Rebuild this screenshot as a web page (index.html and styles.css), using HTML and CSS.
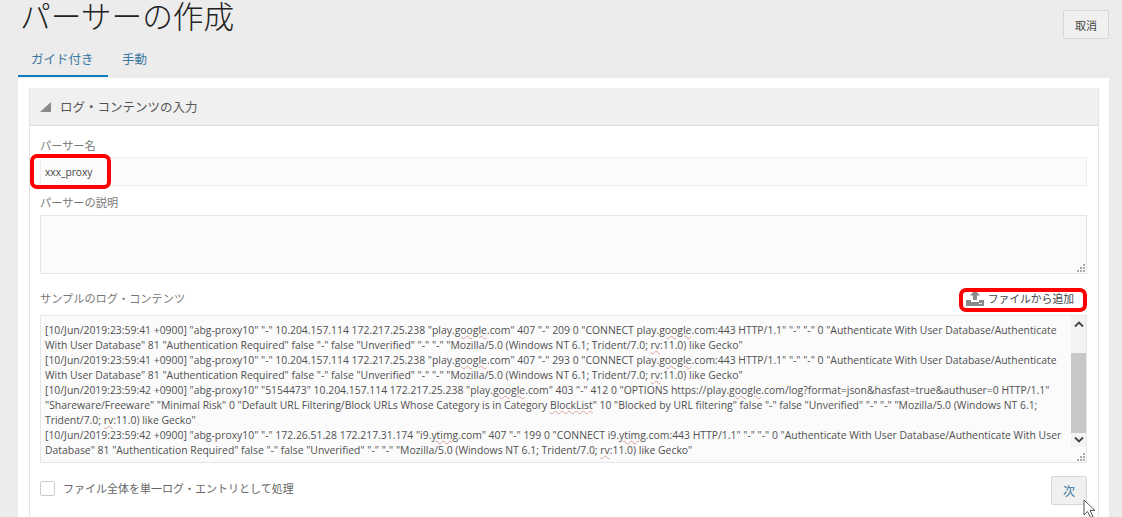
FILE: index.html
```html
<!DOCTYPE html>
<html lang="ja">
<head>
<meta charset="utf-8">
<title>パーサーの作成</title>
<link rel="stylesheet" href="styles.css">
</head>
<body>
<div class="page">
  <header class="top">
    <h1>パーサーの作成</h1>
    <button class="btn cancel">取消</button>
  </header>
  <nav class="tabs">
    <a class="tab active">ガイド付き</a>
    <a class="tab">手動</a>
  </nav>
  <main class="panel">
    <section class="section">
      <div class="section-head">
        <svg class="tri" width="11" height="11" viewBox="0 0 11 11"><path d="M11 1V11H0Z" fill="#8a8a8a"/></svg>
        <span>ログ・コンテンツの入力</span>
      </div>
      <div class="section-body">
        <label class="lbl">パーサー名</label>
        <div class="input"><span>xxx_proxy</span><i class="hl hl-name"></i></div>
        <label class="lbl lbl2">パーサーの説明</label>
        <div class="area desc"><svg class="grip" width="8" height="8" viewBox="0 0 8 8"><path d="M6 0h2v2H6zM3 3h2v2H3zM6 3h2v2H6zM0 6h2v2H0zM3 6h2v2H3zM6 6h2v2H6z" fill="#aaa"/></svg></div>
        <div class="sample-row">
          <label class="lbl">サンプルのログ・コンテンツ</label>
          <button class="file-btn">
            <svg width="18" height="17" viewBox="0 0 18 17"><path d="M9 0l5 5.500h-3V10H7V5.500H4z" fill="#8a8a8a"/><path d="M0 10h5v2h8v-2h5v6H0z" fill="#8a8a8a"/><path d="M13 13h3v1h-3z" fill="#eee"/></svg>
            <span>ファイルから追加</span>
            <i class="hl hl-file"></i>
          </button>
        </div>
        <div class="area log">
          <div class="log-text">[10/Jun/2019:23:59:41 +0900] "abg-proxy10" "-" 10.204.157.114 172.217.25.238 "play.<u>google</u>.com" 407 "-" 209 0 "CONNECT play.<u>google</u>.com:443 HTTP/1.1" "-" "-" 0 "Authenticate With User Database/Authenticate<br>With User Database" 81 "Authentication Required" false "-" false "Unverified" "-" "-" "Mozilla/5.0 (Windows NT 6.1; Trident/7.0; <u>rv</u>:11.0) like Gecko"<br>[10/Jun/2019:23:59:41 +0900] "abg-proxy10" "-" 10.204.157.114 172.217.25.238 "play.<u>google</u>.com" 407 "-" 293 0 "CONNECT play.<u>google</u>.com:443 HTTP/1.1" "-" "-" 0 "Authenticate With User Database/Authenticate<br>With User Database" 81 "Authentication Required" false "-" false "Unverified" "-" "-" "Mozilla/5.0 (Windows NT 6.1; Trident/7.0; <u>rv</u>:11.0) like Gecko"<br>[10/Jun/2019:23:59:42 +0900] "abg-proxy10" "5154473" 10.204.157.114 172.217.25.238 "play.<u>google</u>.com" 403 "-" 412 0 "OPTIONS https://play.<u>google</u>.com/log?format=json&amp;hasfast=true&amp;authuser=0 HTTP/1.1"<br>"Shareware/Freeware" "Minimal Risk" 0 "Default URL Filtering/Block URLs Whose Category is in Category <u>BlockList</u>" 10 "Blocked by URL filtering" false "-" false "Unverified" "-" "-" "Mozilla/5.0 (Windows NT 6.1;<br>Trident/7.0; <u>rv</u>:11.0) like Gecko"<br>[10/Jun/2019:23:59:42 +0900] "abg-proxy10" "-" 172.26.51.28 172.217.31.174 "i9.<u>ytimg</u>.com" 407 "-" 199 0 "CONNECT i9.<u>ytimg</u>.com:443 HTTP/1.1" "-" "-" 0 "Authenticate With User Database/Authenticate With User<br>Database" 81 "Authentication Required" false "-" false "Unverified" "-" "-" "Mozilla/5.0 (Windows NT 6.1; Trident/7.0; <u>rv</u>:11.0) like Gecko"</div>
          <div class="scroll">
            <svg width="10" height="7" viewBox="0 0 10 7"><path d="M1 5.500l4-4 4 4" fill="none" stroke="#444" stroke-width="1.800"/></svg>
            <div class="track"><div class="thumb"></div></div>
            <svg width="10" height="7" viewBox="0 0 10 7"><path d="M1 1.500l4 4 4-4" fill="none" stroke="#444" stroke-width="1.800"/></svg>
          </div>
          <svg class="grip" width="8" height="8" viewBox="0 0 8 8"><path d="M6 0h2v2H6zM3 3h2v2H3zM6 3h2v2H6zM0 6h2v2H0zM3 6h2v2H3zM6 6h2v2H6z" fill="#aaa"/></svg>
        </div>
        <div class="foot">
          <label class="check"><span class="box"></span><span>ファイル全体を単一ログ・エントリとして処理</span></label>
          <button class="btn next">次</button>
        </div>
      </div>
    </section>
  </main>
</div>
<svg class="cursor" width="16" height="20" viewBox="0 0 16 20"><path d="M1 1v15l3.500-3.500 3 6 2.500-1-3-6h5z" fill="#fff" stroke="#555" stroke-width="1"/></svg>
</body>
</html>
```

FILE: styles.css
```css
html, body { margin: 0; padding: 0; }
body {
  width: 1122px;
  height: 517px;
  overflow: hidden;
  background: #ececec;
  color: #4a4a4a;
  font-family: "Open Sans", "Noto Sans CJK JP", sans-serif;
  position: relative;
}
.page { padding-left: 18px; width: 1091px; }
.top {
  display: flex;
  justify-content: space-between;
  height: 48px;
}
h1 {
  margin: 0 0 0 2px;
  font-family: "Noto Sans CJK JP", sans-serif;
  font-size: 30.700px;
  line-height: 30px;
  font-weight: 300;
  color: #222;
}
.btn {
  font-family: "Noto Sans CJK JP", sans-serif;
  font-size: 11px;
  border: 1px solid #d8d8d8;
  border-radius: 2px;
  background: #f0f0f0;
  color: #444;
  padding: 0;
}
.cancel { width: 46px; height: 29px; margin-top: 10px; }
.tabs { display: flex; height: 29px; }
.tab {
  font-family: "Noto Sans CJK JP", sans-serif;
  font-size: 12.500px;
  line-height: 22px;
  color: #3a76a0;
  padding: 0 14px;
}
.tab.active { border-bottom: 2px solid #0f7dc2; padding: 0 13px; width: 90px; box-sizing: border-box; height: 29px; white-space: nowrap; }
.panel {
  background: #fff;
  padding: 10px 10px 0 11px;
  height: 440px;
  box-sizing: border-box;
  margin-top: 1px;
}
.section { border-left: 1px solid #e4e4e4; border-right: 1px solid #e4e4e4; height: 440px; }
.section-head {
  height: 37px;
  background: #f0f0f0;
  border-bottom: 1px solid #dedede;
  display: flex;
  align-items: center;
  gap: 9px;
  padding-left: 10px;
  font-family: "Noto Sans CJK JP", sans-serif;
  font-size: 12.500px;
  color: #555;
}
.section-body { padding: 11px 11px 0 10px; }
.lbl {
  display: block;
  font-family: "Noto Sans CJK JP", sans-serif;
  font-size: 11.200px;
  line-height: 17px;
  color: #777;
}
.input {
  position: relative;
  height: 29px;
  margin-top: 3px;
  border: 1px solid #eee;
  background: #fbfbfb;
  box-sizing: border-box;
  padding-left: 4px;
  font-size: 10.200px;
  line-height: 28px;
  color: #444;
}
.lbl2 { margin-top: 8px; }
.area {
  position: relative;
  border: 1px solid #e6e6e6;
  background: #fbfbfb;
  box-sizing: border-box;
}
.desc { height: 59px; margin-top: 4px; }
.grip { position: absolute; right: 1px; bottom: 1px; }
.sample-row {
  display: flex;
  justify-content: space-between;
  align-items: center;
  height: 24px;
  margin-top: 12px;
}
.file-btn {
  position: relative;
  display: flex;
  align-items: center;
  gap: 4px;
  border: 0;
  background: none;
  padding: 0 13px 0 0;
  font-family: "Noto Sans CJK JP", sans-serif;
  font-size: 10.800px;
  color: #444;
}
.hl {
  position: absolute;
  border: 4px solid #f00;
  border-radius: 7px;
  box-sizing: border-box;
  display: block;
}
.hl-name { left: -11px; top: -4px; width: 81px; height: 35px; }
.hl-file { right: 0; top: -2px; width: 128px; height: 24px; }
.log {
  height: 148px;
  margin-top: 5px;
  display: flex;
}
.log-text {
  flex: 1;
  padding: 7px 0 0 4px;
  font-size: 10.400px;
  line-height: 15px;
  color: #505050;
  white-space: nowrap;
  overflow: hidden;
}
.log-text u { text-decoration: underline wavy #d9a0a0 0.500px; text-underline-offset: 1px; }
.scroll {
  width: 15px;
  background: #f3f3f3;
  display: flex;
  flex-direction: column;
  align-items: center;
  height: 131px;
  padding: 5px 0 4px;
  box-sizing: border-box;
  flex: none;
}
.track { flex: 1; width: 15px; margin: 5px 0 3px; padding-top: 20px; box-sizing: border-box; }
.thumb { height: 80px; background: #c8c8c8; }
.foot {
  display: flex;
  justify-content: space-between;
  margin-top: 13px;
}
.check {
  display: flex;
  align-items: center;
  gap: 8px;
  height: 24px;
  font-family: "Noto Sans CJK JP", sans-serif;
  font-size: 11px;
  color: #666;
}
.box {
  width: 13px;
  height: 13px;
  border: 1px solid #ccc;
  border-radius: 2px;
  background: #fff;
}
.next { width: 36px; height: 29px; color: #3a76a0; font-size: 12px; }
.cursor { position: absolute; left: 1083px; top: 499px; }
```
